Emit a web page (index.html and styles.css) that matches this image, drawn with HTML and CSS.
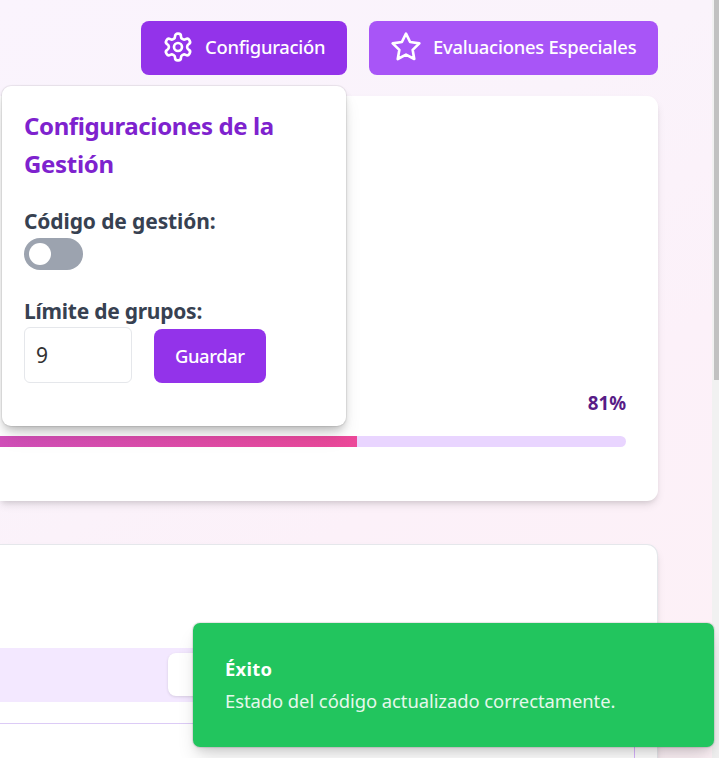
FILE: index.html
```html
<!DOCTYPE html>
<html lang="es">
<head>
<meta charset="utf-8">
<title>Gestión</title>
<link rel="stylesheet" href="styles.css">
</head>
<body>
<main class="page">
  <header class="actions">
    <button class="btn btn-config">
      <svg class="icon" viewBox="0 0 24 24"><path d="M12.22 2h-.44a2 2 0 0 0-2 2v.18a2 2 0 0 1-1 1.73l-.43.25a2 2 0 0 1-2 0l-.15-.08a2 2 0 0 0-2.73.73l-.22.38a2 2 0 0 0 .73 2.73l.15.1a2 2 0 0 1 1 1.72v.51a2 2 0 0 1-1 1.74l-.15.09a2 2 0 0 0-.73 2.73l.22.38a2 2 0 0 0 2.73.73l.15-.08a2 2 0 0 1 2 0l.43.25a2 2 0 0 1 1 1.73V20a2 2 0 0 0 2 2h.44a2 2 0 0 0 2-2v-.18a2 2 0 0 1 1-1.73l.43-.25a2 2 0 0 1 2 0l.15.08a2 2 0 0 0 2.73-.73l.22-.39a2 2 0 0 0-.73-2.73l-.15-.08a2 2 0 0 1-1-1.74v-.5a2 2 0 0 1 1-1.74l.15-.09a2 2 0 0 0 .73-2.73l-.22-.38a2 2 0 0 0-2.73-.73l-.15.08a2 2 0 0 1-2 0l-.43-.25a2 2 0 0 1-1-1.73V4a2 2 0 0 0-2-2z"/><circle cx="12" cy="12" r="3"/></svg>
      <span class="label-config">Configuración</span>
    </button>
    <button class="btn btn-special">
      <svg class="icon" viewBox="0 0 24 24"><polygon points="12 2 15.09 8.26 22 9.27 17 14.14 18.18 21.02 12 17.77 5.82 21.02 7 14.14 2 9.27 8.91 8.26"/></svg>
      <span class="label-special">Evaluaciones Especiales</span>
    </button>
  </header>

  <section class="card summary">
    <div class="percent"><span>81%</span></div>
    <div class="track"><div class="fill"></div></div>
    <div class="popover">
      <h2 class="pop-title"><span class="title-a">Configuraciones de la</span><br><span class="title-b">Gestión</span></h2>
      <div class="field-label"><span class="label-code">Código de gestión:</span></div>
      <div class="switch"><span class="knob"></span></div>
      <div class="field-label second"><span class="label-limit">Límite de grupos:</span></div>
      <div class="limit-row">
        <div class="number"><span>9</span></div>
        <button class="btn btn-save"><span class="label-save">Guardar</span></button>
      </div>
    </div>
  </section>

  <section class="card details">
    <div class="tabs"><div class="tab"></div></div>
    <div class="panel"></div>
  </section>
</main>

<div class="toast">
  <div class="toast-title"><span>Éxito</span></div>
  <div class="toast-text"><span>Estado del código actualizado correctamente.</span></div>
</div>
<div class="scrollbar"><div class="thumb"></div></div>
</body>
</html>
```
FILE: styles.css
```css
* { box-sizing: border-box; }
body {
  margin: 0;
  height: 758px;
  overflow: hidden;
  font-family: "Noto Sans", sans-serif;
  background: linear-gradient(150deg, #faf4fd 0%, #faf3fb 35%, #fcf1f9 62%, #fdf1f6 100%);
}
.page { width: 658px; height: 758px; padding-top: 21px; overflow: clip; overflow-clip-margin: 30px; }
.actions { display: flex; justify-content: flex-end; gap: 22px; height: 54px; }
.btn {
  display: flex; align-items: center; height: 54px; padding: 0 0 2px 21px;
  border: 0; border-radius: 8px; color: #fff;
  font: 500 18.4px "Noto Sans", sans-serif; white-space: nowrap;
}
.btn-config { width: 206px; background: #9333ea; }
.btn-special { width: 289px; background: #a855f7; }
.icon {
  flex: none; width: 32px; height: 32px; margin-right: 11px;
  fill: none; stroke: #fff; stroke-width: 2; stroke-linecap: round; stroke-linejoin: round;
}
.label-config { letter-spacing: -0.25px; padding-bottom: 2px; }
.label-special { letter-spacing: -0.23px; padding-bottom: 2px; }
.label-save { letter-spacing: -0.4px; }

.card { background: #fff; }
.summary {
  position: relative; height: 405px; margin-top: 21px; padding: 293px 32px 0 0;
  border-radius: 0 11px 11px 0;
  box-shadow: 0 5px 8px -1px rgba(0,0,0,.1), 0 3px 5px -2px rgba(0,0,0,.1);
}
.percent {
  height: 28px; line-height: 28px; text-align: right;
  font-size: 18.7px; font-weight: 700; color: #581c87;
}
.track {
  height: 11px; margin-top: 19px; overflow: hidden;
  background: #e9d5ff; border-radius: 0 6px 6px 0;
}
.fill { width: 357px; height: 11px; background: linear-gradient(90deg, #d14fb9, #ec4899); }

.popover {
  position: absolute; left: 2px; top: -10px; width: 344px; height: 340px;
  padding: 21px 22px; background: #fff; border-radius: 9px;
  box-shadow: 0 0 1px 1px rgba(0,0,0,.07), 0 13px 20px -4px rgba(0,0,0,.12), 0 5px 8px -2px rgba(0,0,0,.22);
}
.pop-title {
  margin: 0; font-size: 24px; line-height: 38px; font-weight: 700;
  color: #7e22ce; white-space: nowrap;
}
.title-a { letter-spacing: -0.39px; }
.title-b { letter-spacing: -0.3px; }
.field-label {
  height: 32px; margin-top: 22px; line-height: 32px;
  font-size: 21px; font-weight: 700; color: #374151; white-space: nowrap;
}
.field-label.second { margin-top: 25px; }
.label-code { letter-spacing: -0.12px; }
.label-limit { letter-spacing: -0.25px; }
.switch {
  width: 59px; height: 32px; padding: 5px;
  border-radius: 16px; background: #9ca3af; margin-top: 1px;
}
.knob { display: block; width: 22px; height: 22px; border-radius: 50%; background: #fff; }
.limit-row { display: flex; gap: 22px; }
.number {
  width: 108px; height: 56px; padding-left: 11px; line-height: 54px;
  border: 1px solid #e5e7eb; border-radius: 6px; font-size: 21px; color: #333;
}
.btn-save { width: 112px; margin-top: 2px; padding: 0 0 1px 21px; background: #9333ea; }

.details {
  height: 300px; margin-top: 43px; padding-top: 103px;
  border: 1px solid #e5e7eb; border-left: 0; border-radius: 0 11px 0 0;
  box-shadow: 0 5px 8px -1px rgba(0,0,0,.1), 0 3px 5px -2px rgba(0,0,0,.1);
}
.tabs { height: 54px; padding: 5px 0 0 168px; background: #f3e8ff; margin-right: 22px; }
.tab { width: 220px; height: 43px; border-radius: 8px; background: #fff; box-shadow: 0 1px 3px rgba(0,0,0,.12); }
.panel { height: 120px; margin: 21px 22px 0 0; border: 1px solid #d8b4fe; border-top-color: #dccbf6; border-left: 0; }

.toast {
  position: absolute; left: 193px; top: 623px; width: 521px; height: 124px;
  padding: 32px; border-radius: 7px; background: #22c55e; color: #fff;
  box-shadow: 0 0 1px 1px rgba(0,0,0,.1), 0 13px 20px -4px rgba(0,0,0,.14), 0 5px 8px -3px rgba(0,0,0,.12);
  font-size: 18.4px; line-height: 27px; white-space: nowrap;
}
.toast-title { font-weight: 700; letter-spacing: 0.3px; }
.toast-text { margin-top: 5px; color: #e5f8ec; letter-spacing: -0.05px; }

.scrollbar { position: absolute; right: 0; top: 0; width: 7px; height: 758px; padding-left: 2px; background: #f1f1f1; z-index: -1; }
.thumb { height: 380px; background: #c1c1c1; }
```
